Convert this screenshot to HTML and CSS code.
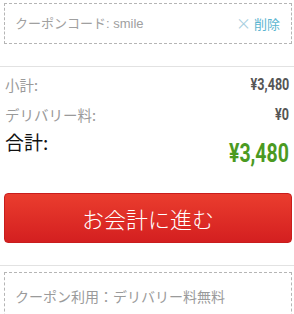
FILE: index.html
```html
<!DOCTYPE html>
<html lang="ja">
<head>
<meta charset="utf-8">
<link rel="stylesheet" href="styles.css">
</head>
<body>
<div class="page">
  <div class="coupon">
    <span class="coupon-code">クーポンコード: smile</span>
    <span class="remove"><span class="x">×</span> 削除</span>
  </div>
  <div class="summary">
    <div class="row">
      <span class="label">小計:</span>
      <span class="amount">¥3,480</span>
    </div>
    <div class="row">
      <span class="label">デリバリー料:</span>
      <span class="amount">¥0</span>
    </div>
    <div class="row total">
      <span class="label">合計:</span>
      <span class="amount">¥3,480</span>
    </div>
  </div>
  <div class="action">
    <button class="checkout">お会計に進む</button>
  </div>
  <div class="applied">
    <div class="coupon-note">クーポン利用：デリバリー料無料</div>
  </div>
</div>
</body>
</html>
```
FILE: styles.css
```css
* { box-sizing: border-box; }
html, body { margin: 0; padding: 0; background: #fff; }
body {
  font-family: "Noto Sans CJK JP", "Noto Sans", sans-serif;
  width: 294px;
  height: 314px;
  overflow: hidden;
}
.page { padding: 3px 2px 0 4px; }
.coupon {
  height: 41px;
  border: 1px dashed #b5b5b5;
  display: flex;
  align-items: center;
  justify-content: space-between;
  padding: 0 11px 0 10px;
  font-size: 13px;
  line-height: 16px;
}
.coupon-code { color: #a0a0a0; font-family: "Liberation Sans", "Noto Sans CJK JP", sans-serif; }
.remove { color: #5bb5d0; }
.remove .x { color: #a8cfe0; font-size: 15px; }
.summary {
  margin: 22px -2px 0 -4px;
  border-top: 1px solid #e2e2e2;
  padding: 2px 5px 0 5px;
}
.row {
  display: flex;
  justify-content: space-between;
  align-items: center;
  height: 30px;
}
.label { color: #9a9a9a; font-size: 14.5px; }
.amount {
  color: #555;
  font-family: Roboto, "Liberation Sans", sans-serif;
  font-weight: bold;
  font-size: 17px;
  line-height: 20px;
  display: inline-block;
  transform: scaleX(0.74);
  transform-origin: right center;
}
.row.total { height: 44px; align-items: flex-start; }
.total .label { color: #111; font-size: 19px; line-height: 24px; margin-top: 1px; }
.total .amount {
  color: #4b9a22;
  font-size: 25px;
  line-height: 30px;
  margin-top: 10px;
  transform: scaleX(0.78);
}
.action { padding: 20px 0 0 0; }
.checkout {
  display: block;
  width: 100%;
  height: 50px;
  border: 1px solid #c81d1d;
  border-radius: 4px;
  background: linear-gradient(#ea3d2e, #d41f20);
  color: #fff;
  font-family: "Noto Sans CJK JP", sans-serif;
  font-size: 22px;
  font-weight: 300;
  padding: 0;
}
.applied {
  margin: 22px -2px 0 -4px;
  border-top: 1px solid #e2e2e2;
  padding: 6px 2px 0 4px;
}
.coupon-note {
  height: 50px;
  border: 1px dashed #b5b5b5;
  border-bottom: none;
  padding: 13px 10px 0;
  color: #9a9a9a;
  font-size: 14px;
}
```
